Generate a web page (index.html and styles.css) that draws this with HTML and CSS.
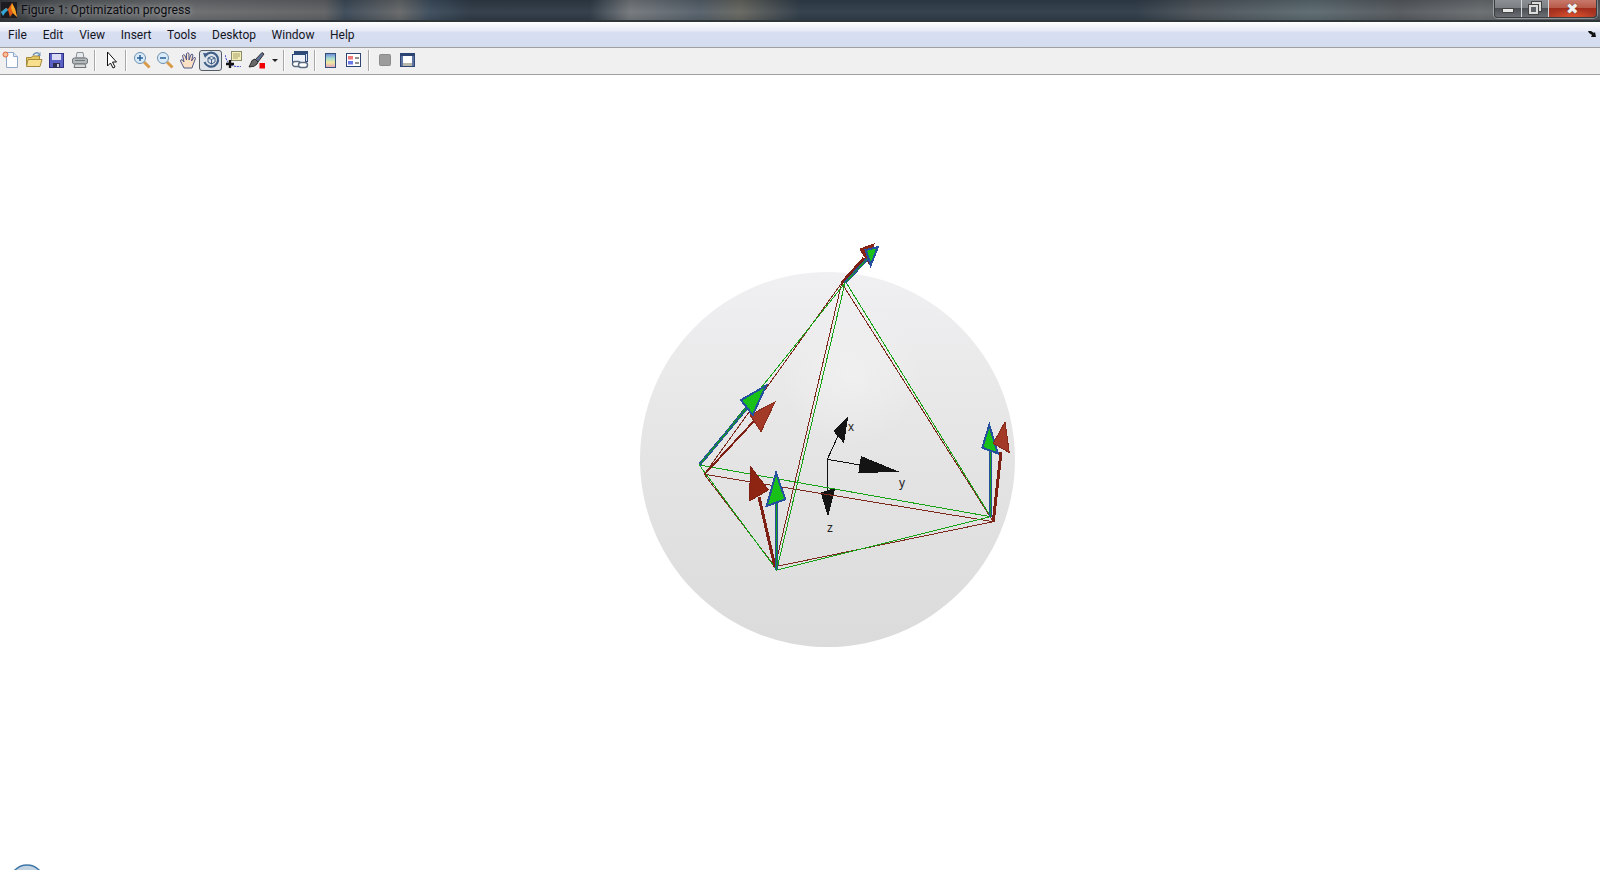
FILE: index.html
```html
<!DOCTYPE html>
<html lang="en">
<head>
	<meta charset="UTF-8">
	<title>Figure 1: Optimization progress</title>
	<link rel="stylesheet" href="styles.css">
</head>
<body>
	<div id="titleBar">
		<svg class="logo" width="16" height="16" viewBox="0 0 16 16">
			<rect width="16" height="16" fill="#1c1c20"/>
			<path d="M0 10 L5 6 L7 7 L11 1 L14 7 L16 15 L12 11 L9 15 L7 8 L4 10 L2 13Z" fill="#dd5a18"/>
			<path d="M11 1 L14 7 L16 15 L12 11 L10 6Z" fill="#f5a623"/>
			<path d="M0 10 L5 6 L7 8 L4 11 L2 14Z" fill="#2fa6d8"/>
		</svg>
		<span class="titleText">Figure 1: Optimization progress</span>
		<div class="winBtns">
			<div class="winBtn minBtn"><i></i></div>
			<div class="winBtn maxBtn"><i></i><b></b></div>
			<div class="winBtn closeBtn">&#10006;</div>
		</div>
	</div>
	<div id="menuBar">
		<span>File</span>
		<span>Edit</span>
		<span>View</span>
		<span>Insert</span>
		<span>Tools</span>
		<span>Desktop</span>
		<span>Window</span>
		<span>Help</span>
		<svg class="dock" width="9" height="7" viewBox="0 0 9 7"><path d="M0 0 L3 0 L6 2 L7 1 L8 6 L3 6 L4 4 L1 2Z" fill="#111"/></svg>
	</div>
	<div id="toolBar">
		<div class="tool"><svg width="18" height="18" viewBox="0 0 18 18">
			<path d="M4.5 1.5h7l4 4v11h-11z" fill="#fdfdff" stroke="#8fa8cc"/>
			<path d="M11.5 1.5v4h4" fill="#dfe8f5" stroke="#8fa8cc"/>
			<circle cx="3.5" cy="3.5" r="2.5" fill="#f6c09a" stroke="#e2643c"/>
		</svg></div>
		<div class="tool"><svg width="18" height="18" viewBox="0 0 18 18">
			<path d="M1.5 15V6.5h5l1 -1.5h7v3" fill="#e8c860" stroke="#a38a3c"/>
			<path d="M1.5 15.5 L3 8.5 H17 L15 15.5Z" fill="#f7df8c" stroke="#a38a3c"/>
			<path d="M8 4 Q11 0.5 14 2.5" fill="none" stroke="#6d93b8" stroke-width="1.5"/>
			<path d="M15.5 1 V5 H12Z" fill="#6d93b8"/>
		</svg></div>
		<div class="tool"><svg width="18" height="18" viewBox="0 0 18 18">
			<rect x="1.5" y="2.5" width="14" height="14" fill="#5a60c4" stroke="#2d2f80"/>
			<rect x="4" y="3" width="9" height="6" fill="#d9dcf4"/>
			<rect x="5" y="12" width="7" height="4.5" fill="#2f3050"/>
			<rect x="9" y="13" width="2" height="3" fill="#c8c8d8"/>
		</svg></div>
		<div class="tool"><svg width="18" height="18" viewBox="0 0 18 18">
			<path d="M5 7 L6 1.5 H12 L13 7Z" fill="#e8eaec" stroke="#8a9298"/>
			<rect x="1.5" y="7" width="15" height="6" rx="2" fill="#b4babc" stroke="#6e7476"/>
			<path d="M4 13 H14 L15 16.5 H3Z" fill="#d6d9da" stroke="#6e7476"/>
			<rect x="4" y="9" width="10" height="1" fill="#70787a"/>
		</svg></div>
		<div class="sep"></div>
		<div class="tool"><svg width="18" height="18" viewBox="0 0 18 18">
			<path d="M5.5 1 V15 L8.5 12 L11 17 L13 16 L10.5 11 H14.5Z" fill="#fff" stroke="#111"/>
		</svg></div>
		<div class="sep"></div>
		<div class="tool"><svg width="18" height="18" viewBox="0 0 18 18">
			<path d="M11 11 L16.5 16.5" stroke="#d89a48" stroke-width="3"/>
			<circle cx="7" cy="7" r="5.5" fill="#d8ecfa" stroke="#6f90ae"/>
			<path d="M4 7h6M7 4v6" stroke="#2c5f96" stroke-width="1.5"/>
		</svg></div>
		<div class="tool"><svg width="18" height="18" viewBox="0 0 18 18">
			<path d="M11 11 L16.5 16.5" stroke="#d89a48" stroke-width="3"/>
			<circle cx="7" cy="7" r="5.5" fill="#d8ecfa" stroke="#6f90ae"/>
			<path d="M4 7h6" stroke="#2c5f96" stroke-width="1.5"/>
		</svg></div>
		<div class="tool"><svg width="18" height="18" viewBox="0 0 18 18">
			<path d="M5 17 L1.5 10 Q1.5 8 3.5 9 L5 11 L3.5 4.5 Q4.5 3 6 4.5 L7.5 9 L7.5 2.5 Q8.7 1 10 2.5 L10 9 L12 3.5 Q13.5 2.5 14 4 L12.5 10 L15 6.5 Q16.5 6 16.5 7.5 L14 14 L13 17Z" fill="#fbe0c4" stroke="#50588a"/>
		</svg></div>
		<div class="tool on"><svg width="18" height="18" viewBox="0 0 18 18">
			<path d="M3.5 4.5 A7 7 0 1 1 2.5 11" fill="none" stroke="#3f5f88" stroke-width="2.2"/>
			<path d="M1 2 L6.5 2.5 L3 7Z" fill="#3f5f88"/>
			<path d="M6 7 L9.5 5.5 L13 7 V11 L9.5 13 L6 11Z M6 7 L9.5 8.5 L13 7 M9.5 8.5V13" fill="#dfe6ee" stroke="#3f5f88"/>
		</svg></div>
		<div class="tool"><svg width="18" height="18" viewBox="0 0 18 18">
			<rect x="6.5" y="0.5" width="10" height="9" fill="#f4efb4" stroke="#8a8a70"/>
			<path d="M8 3h7M8 5h7M8 7h5" stroke="#a8a070"/>
			<path d="M0 4 Q2 12 6 14 Q10 16 16 15.5" fill="none" stroke="#2636c8" stroke-dasharray="2 1"/>
			<path d="M5 9v8M1 13h8" stroke="#111" stroke-width="2.4"/>
		</svg></div>
		<div class="tool"><svg width="18" height="18" viewBox="0 0 18 18">
			<path d="M7 9 L14 1.5 L16 3 L10 11Z" fill="#5f6f96" stroke="#333"/>
			<path d="M7 8 Q3 9 3 12 L1 16 Q7 16 9 13 L10 11Z" fill="#6a6a6a" stroke="#2d2d2d"/>
			<rect x="11.5" y="12" width="5.5" height="5.5" fill="#f00000"/>
		</svg></div>
		<div class="drop"></div>
		<div class="sep"></div>
		<div class="tool"><svg width="18" height="18" viewBox="0 0 18 18">
			<rect x="3.5" y="0.5" width="13" height="10" fill="#dde6f2" stroke="#2e4a78"/>
			<rect x="3.5" y="0.5" width="13" height="2.5" fill="#2e4a78"/>
			<rect x="1.5" y="3.5" width="13" height="10" fill="#eef2f8" stroke="#2e4a78"/>
			<rect x="1.5" y="10.5" rx="2.5" width="8" height="5" fill="#fff" stroke="#5a6a80" stroke-width="1.4"/>
			<rect x="7.5" y="11.5" rx="2.5" width="9" height="5" fill="#fff" stroke="#5a6a80" stroke-width="1.4"/>
		</svg></div>
		<div class="sep"></div>
		<div class="tool"><svg width="11" height="15" viewBox="0 0 11 15">
			<rect x="0.5" y="0.5" width="10" height="14" fill="url(#cbar)" stroke="#33507c"/>
			<defs><linearGradient id="cbar" x1="0" y1="0" x2="0" y2="1">
				<stop offset="0" stop-color="#6a86d8"/>
				<stop offset="0.35" stop-color="#a8dcd0"/>
				<stop offset="0.65" stop-color="#f0e8a0"/>
				<stop offset="1" stop-color="#e0a0c0"/>
			</linearGradient></defs>
		</svg></div>
		<div class="tool"><svg width="15" height="14" viewBox="0 0 15 14">
			<rect x="0.5" y="0.5" width="14" height="13" fill="#fff" stroke="#2d4373"/>
			<rect x="2" y="3" width="5" height="3.5" fill="#f07878"/>
			<rect x="2" y="8" width="5" height="3.5" fill="#6a78e8"/>
			<path d="M9 5h4M9 10h4" stroke="#222"/>
		</svg></div>
		<div class="sep"></div>
		<div class="tool"><svg width="14" height="14" viewBox="0 0 14 14">
			<rect x="1.5" y="1.5" width="11" height="11" rx="1" fill="#9c9c9c" stroke="#8a8a8a"/>
		</svg></div>
		<div class="tool"><svg width="15" height="14" viewBox="0 0 15 14">
			<rect x="0.5" y="0.5" width="14" height="13" fill="#f6f8fc" stroke="#2d4373"/>
			<rect x="1" y="1" width="13" height="2" fill="#2d4373"/>
			<rect x="3" y="3" width="9" height="7" fill="#fff"/>
			<rect x="1" y="3" width="2" height="10" fill="#5d75a0"/>
			<rect x="12" y="3" width="2" height="10" fill="#5d75a0"/>
			<rect x="3" y="10" width="9" height="3" fill="#b8b8a8"/>
		</svg></div>
	</div>
	<svg id="plot" width="1600" height="795" viewBox="0 75 1600 795">
		<defs>
			<linearGradient id="sphereBase" x1="0" y1="0" x2="0" y2="1">
				<stop offset="0" stop-color="#f0f0f2"/>
				<stop offset="0.5" stop-color="#e4e4e4"/>
				<stop offset="1" stop-color="#dbdbdb"/>
			</linearGradient>
			<radialGradient id="sphereShine" gradientUnits="userSpaceOnUse" cx="850" cy="375" r="70">
				<stop offset="0" stop-color="#f2f2f2" stop-opacity="0.7"/>
				<stop offset="1" stop-color="#f2f2f2" stop-opacity="0"/>
			</radialGradient>
		</defs>
		<circle cx="827.5" cy="459.5" r="187.5" fill="url(#sphereBase)"/>
		<circle cx="827.5" cy="459.5" r="187.5" fill="url(#sphereShine)"/>
		<g class="jag">
			<!-- axes -->
			<path class="axis" d="M827.3 459.3 L838 436 M827.3 459.3 L860 465 M827.3 459.3 V490"/>
			<path class="axisHead" d="M848.3 415.7 L833.3 431 L844 443.3Z"/>
			<path class="axisHead" d="M899 471.7 L861 456 L858.3 473.3Z"/>
			<path class="axisHead" d="M828 517 L820.7 492.7 L835.3 487.7Z"/>

			<!-- wireframes -->
			<path class="wireRed" d="M841.7 283 L704.3 474.3 L775 566.7 L841.7 283 L993.3 521.7 L704.3 474.3 M775 566.7 L993.3 521.7"/>
			<path class="wireGreen" d="M845 283 L699.3 465 L776.7 570 L845 283 M847 284 L990.7 516.7 L699.3 465 M776.7 570 L990.7 516.7"/>

			<!-- red arrows -->
			<path class="shaftRed" d="M841.7 283 L864 258"/>
			<path class="headDark" d="M860 249 L874 244 L869 264Z"/>
			<path class="shaftRed thin" d="M704.3 474.3 L755 420"/>
			<path class="headRed" d="M775 402 L750 415 L761 431.7Z"/>
			<path class="shaftRed" d="M775 567 L759 497"/>
			<path class="headDark" d="M750.7 466.7 L749.3 501 L768.3 490Z"/>

			<!-- green arrows -->
			<path class="shaftBlue" d="M845 283 L867 259"/>
			<path class="shaftGreen" d="M845 283 L867 259"/>
			<path class="headGreen" d="M878 247 L865.7 250 L870.7 265Z"/>
			<path class="shaftBlue" d="M699.3 465 L747 408"/>
			<path class="shaftGreen" d="M699.3 465 L747 408"/>
			<path class="headGreen" d="M766 385.7 L741 400 L752.7 415Z"/>
			<path class="shaftBlue" d="M776.7 570 V503"/>
			<path class="shaftGreen" d="M776.7 570 V503"/>
			<path class="headGreen" d="M776 473 L766.7 506 L785.3 499.3Z"/>
			<path class="shaftBlue" d="M991 517 L990 450"/>
			<path class="shaftGreen" d="M991 517 L990 450"/>
			<path class="headGreen" d="M989.3 425 L982.3 447.7 L997.7 453.3Z"/>

			<!-- red arrow on top of the green one -->
			<path class="shaftRed" d="M993.3 521.7 L1001 452"/>
			<path class="headRed" d="M1005 422 L993.3 443.3 L1009.3 452.7Z"/>
		</g>
		<text class="axisLabel" x="848" y="431">x</text>
		<text class="axisLabel" x="899" y="487">y</text>
		<text class="axisLabel" x="827" y="532">z</text>
		<circle class="cornerBlob" cx="27" cy="882" r="17"/>
	</svg>
</body>
</html>
```

FILE: styles.css
```css
*{
	margin: 0;
	padding: 0;
	box-sizing: border-box;
}
html,body{
	height: 100%;
	overflow: hidden;
	background: #fff;
}
body{
	font-family: Roboto, "Noto Sans", sans-serif;
	font-size: 12px;
	color: #15151f;
}
#titleBar{
	display: flex;
	align-items: flex-start;
	height: 22px;
	border-bottom: 2px solid #30353a;
	background:
		linear-gradient(180deg, rgba(20,25,30,.18), rgba(255,255,255,.04) 60%, rgba(20,25,30,.1)),
		linear-gradient(90deg, #33363a 0, #55585b 60px, #6b6d6f 180px, #5f6163 325px, #3c4a58 345px, #656768 400px, #3c4c5c 430px, #2e3a46 470px, #2e3a46 590px, #74787c 630px, #55606a 700px, #66665f 740px, #2f3c48 800px, #2f3c48 1137px, #4b5258 1195px, #5b6a70 1311px, #55595d 1400px, #6a6d70 1480px, #50555a 1600px);
}
.logo{
	margin: 2px 4px 0 1px;
}
.titleText{
	font-size: 12.2px;
	line-height: 20px;
	color: #0d0d12;
	text-shadow: 0 0 6px rgba(255,255,255,.55);
}
.winBtns{
	display: flex;
	margin-left: auto;
	margin-right: 3px;
	height: 18px;
	border: 1px solid #3a3d40;
	border-top: 0;
	border-radius: 0 0 4px 4px;
	box-shadow: 0 0 0 1px rgba(255,255,255,.35);
}
.winBtn{
	position: relative;
	display: flex;
	align-items: center;
	justify-content: center;
	height: 17px;
	width: 27px;
	border-right: 1px solid #d5d8da;
	background: linear-gradient(180deg, #8c9094, #7c8084 45%, #4c5054 50%, #6a6e72);
}
.minBtn{
	border-radius: 0 0 0 4px;
}
.minBtn i{
	display: block;
	width: 12px;
	height: 5px;
	margin-top: 4px;
	background: #e8e8e8;
	border: 1px solid #444;
}
.maxBtn i,.maxBtn b{
	position: absolute;
	display: block;
	width: 9px;
	height: 9px;
	border: 2px solid #dcdcdc;
	outline: 1px solid #444;
}
.maxBtn i{
	left: 10px;
	top: 2px;
}
.maxBtn b{
	left: 7px;
	top: 5px;
	background: #5f6367;
}
.closeBtn{
	width: 47px;
	border-right: 0;
	border-radius: 0 0 4px 0;
	font-size: 15px;
	color: #f0f0f0;
	text-shadow: 0 0 1px #333;
	background: radial-gradient(ellipse 22px 9px at 50% 100%, #e0502c, rgba(224,80,44,0)), linear-gradient(180deg, #c8796c, #b85a48 45%, #a32d1c 50%, #b03e28);
}
#menuBar{
	display: flex;
	align-items: center;
	height: 26px;
	border-bottom: 1px solid #a0a0a0;
	background: linear-gradient(180deg, #fdfeff 0, #e6eaf6 9px, #d8dff1 10px, #d4dcef 100%);
}
#menuBar span{
	padding: 0 8px;
	line-height: 24px;
}
#menuBar span:nth-child(n+4){
	margin-left: -0.4px;
}
#menuBar span:last-of-type{
	margin-right: auto;
}
.dock{
	margin-right: 3px;
}
#toolBar{
	display: flex;
	align-items: center;
	height: 27px;
	padding-bottom: 2px;
	background: #f0f0f0;
	border-bottom: 1px solid #a0a0a0;
}
.tool{
	display: flex;
	align-items: center;
	justify-content: center;
	width: 23px;
	height: 21px;
}
.tool:first-child{
	margin-left: -1px;
}
.tool.on{
	border: 1px solid #555b62;
	border-radius: 3px;
	background: #dfe3ea;
}
.sep{
	width: 2px;
	height: 21px;
	margin: 0 3px;
	background: #a8a8a8;
	border-right: 1px solid #fff;
}
.drop{
	width: 12px;
	height: 21px;
	position: relative;
}
.drop:after{
	content: "";
	position: absolute;
	left: 4px;
	top: 9px;
	border-top: 3px solid #222;
	border-left: 3px solid transparent;
	border-right: 3px solid transparent;
}
#plot{
	display: block;
}
.jag{
	shape-rendering: crispEdges;
	fill: none;
}
.axis{
	stroke: #111;
	stroke-width: 1;
}
.axisHead{
	fill: #141414;
	stroke: none;
}
.wireRed{
	stroke: #7c2a1e;
	stroke-width: 1;
}
.wireGreen{
	stroke: #16a316;
	stroke-width: 1;
}
.shaftRed{
	stroke: #7e2114;
	stroke-width: 3;
}
.shaftRed.thin{
	stroke-width: 2;
}
.headRed{
	fill: #a33a28;
	stroke: #8a2c1c;
}
.headDark{
	fill: #8e2412;
	stroke: #7e2114;
}
.shaftBlue{
	stroke: #25509e;
	stroke-width: 3;
}
.shaftGreen{
	stroke: #14a014;
	stroke-width: 1;
}
.headGreen{
	fill: #18c018;
	stroke: #25509e;
	stroke-width: 2;
}
.axisLabel{
	font-family: "Liberation Sans", sans-serif;
	font-size: 12px;
	fill: #222;
}
.cornerBlob{
	fill: #c4d3e2;
	stroke: #3d76a8;
	stroke-width: 1.5;
}
```
